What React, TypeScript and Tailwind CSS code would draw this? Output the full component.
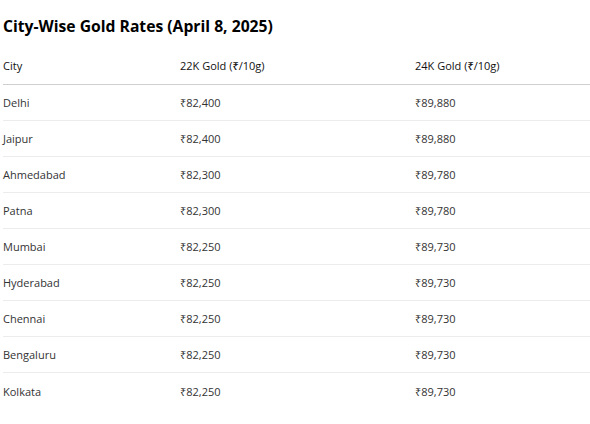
import React from 'react';

type Rate = {
    city: string;
    k22: string;
    k24: string;
};

const rates: Rate[] = [
    {city: 'Delhi', k22: '₹82,400', k24: '₹89,880'},
    {city: 'Jaipur', k22: '₹82,400', k24: '₹89,880'},
    {city: 'Ahmedabad', k22: '₹82,300', k24: '₹89,780'},
    {city: 'Patna', k22: '₹82,300', k24: '₹89,780'},
    {city: 'Mumbai', k22: '₹82,250', k24: '₹89,730'},
    {city: 'Hyderabad', k22: '₹82,250', k24: '₹89,730'},
    {city: 'Chennai', k22: '₹82,250', k24: '₹89,730'},
    {city: 'Bengaluru', k22: '₹82,250', k24: '₹89,730'},
    {city: 'Kolkata', k22: '₹82,250', k24: '₹89,730'},
];

const App = () => {
    return (
        <div className="w-[590px] h-[424px] bg-white pl-[3px] font-['Open_Sans','Noto_Sans',sans-serif] text-[#222]">
            {/* 제목 */}
            <h2 className="pt-[14px] h-[38px] text-[15.7px] leading-[24px] font-bold text-black">
                City-Wise Gold Rates (April 8, 2025)
            </h2>

            {/* 시세 표 */}
            <table className="mt-[10px] w-full table-fixed border-collapse text-[11px]">
                <colgroup>
                    <col className="w-[177px]"/>
                    <col className="w-[235px]"/>
                    <col/>
                </colgroup>
                <thead>
                    <tr className="h-[36px] border-b border-[#cfcfcf] text-left">
                        <th className="font-medium text-[#111] pt-[1px]">City</th>
                        <th className="font-medium text-[#111] pt-[1px]">22K Gold (₹/10g)</th>
                        <th className="font-medium text-[#111] pt-[1px]">24K Gold (₹/10g)</th>
                    </tr>
                </thead>
                <tbody>
                    {rates.map((item, idx) => (
                        <tr
                            key={idx}
                            className={idx === rates.length - 1 ? 'h-[36px]' : 'h-[36.1px] border-b border-[#ececec]'}>
                            <td className="pt-[2px] text-[#333]">{item.city}</td>
                            <td className="pt-[2px] text-[#333]">{item.k22}</td>
                            <td className="pt-[2px] text-[#333]">{item.k24}</td>
                        </tr>
                    ))}
                </tbody>
            </table>
        </div>
    );
};

export default App;
